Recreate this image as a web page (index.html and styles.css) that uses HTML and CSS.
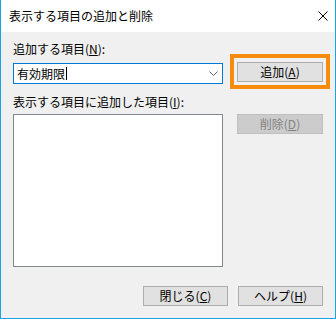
FILE: index.html
```html
<!DOCTYPE html>
<html lang="ja">
<head>
  <meta charset="UTF-8" />
  <title>表示する項目の追加と削除</title>
  <link rel="stylesheet" href="styles.css">
</head>
<body>
  <div class="window">
    <div class="titlebar">
      <span class="title">表示する項目の追加と削除</span>
      <svg class="close" width="10" height="10" viewBox="0 0 10 10">
        <path d="M0.5 0.5 L9.5 9.5 M9.5 0.5 L0.5 9.5" stroke="#000" stroke-width="1" fill="none" />
      </svg>
    </div>

    <div class="content">
      <div class="form">
        <div class="left">
          <div class="label">追加する項目(<u>N</u>):</div>
          <div class="combo">
            <span class="value">有効期限<span class="caret"></span></span>
            <svg class="chevron" width="9" height="5" viewBox="0 0 9 5">
              <path d="M0.5 0.5 L4.5 4.5 L8.5 0.5" stroke="#606060" stroke-width="1" fill="none" />
            </svg>
          </div>
          <div class="label second">表示する項目に追加した項目(<u>I</u>):</div>
          <div class="listbox"></div>
        </div>
        <div class="right">
          <div class="highlight">
            <button class="btn">追加(<u>A</u>)</button>
          </div>
          <button class="btn disabled">削除(<u>D</u>)</button>
        </div>
      </div>

      <div class="footer">
        <button class="btn">閉じる(<u>C</u>)</button>
        <button class="btn">ヘルプ(<u>H</u>)</button>
      </div>
    </div>
  </div>
</body>
</html>
```

FILE: styles.css
```css
:root {
  --win-border: #1aa1e6;
  --face: #f0f0f0;
  --btn-face: #e1e1e1;
  --btn-border: #adadad;
  --focus-blue: #0078d7;
  --mark: #f78b0e;
}

body {
  margin: 0;
  font-family: "Noto Sans CJK JP", "Noto Sans", sans-serif;
  font-size: 12px;
  color: #000;
}

.window {
  width: 336px;
  height: 319px;
  box-sizing: border-box;
  border: 1px solid var(--win-border);
  border-top: none;
  background-color: var(--face);
  display: flex;
  flex-direction: column;
}

/* タイトルバー */
.titlebar {
  height: 31px;
  flex-shrink: 0;
  background-color: #fff;
  display: flex;
  align-items: center;
  justify-content: space-between;
  padding: 0 7px 1px 8px;
}

.title {
  font-size: 12px;
  line-height: 16px;
}

.close {
  display: block;
}

.content {
  flex: 1;
  display: flex;
  flex-direction: column;
  padding: 9px 12px 12px 12px;
}

.form {
  display: flex;
  gap: 14px;
}

.left {
  width: 210px;
  display: flex;
  flex-direction: column;
}

.label {
  line-height: 16px;
  height: 16px;
  margin-bottom: 6px;
  white-space: nowrap;
}

.label.second {
  margin-top: 10px;
  margin-bottom: 4px;
}

.combo {
  height: 21px;
  box-sizing: border-box;
  border: 1px solid var(--focus-blue);
  background-color: #fff;
  display: flex;
  align-items: center;
  justify-content: space-between;
  padding: 0 4px 0 3px;
}

.value {
  display: flex;
  align-items: center;
  line-height: 16px;
}

.caret {
  width: 1px;
  height: 13px;
  background-color: #000;
  margin-left: 1px;
}

.chevron {
  display: block;
}

.listbox {
  height: 153px;
  box-sizing: border-box;
  border: 1px solid #828790;
  background-color: #fff;
}

.right {
  width: 86px;
  display: flex;
  flex-direction: column;
  padding-top: 21px;
}

/* 注目枠（オレンジ） */
.highlight {
  margin: -8px -7px 0 -7px;
  padding: 4px 3px 3px 3px;
  border: 4px solid var(--mark);
}

.btn {
  display: block;
  width: 86px;
  height: 20px;
  box-sizing: border-box;
  padding: 0;
  border: 1px solid var(--btn-border);
  background-color: var(--btn-face);
  font-family: inherit;
  font-size: 12px;
  line-height: 16px;
  color: #000;
}

.btn.disabled {
  margin-top: 25px;
  background-color: #cccccc;
  border-color: #bfbfbf;
  color: #838383;
}

.footer {
  margin-top: auto;
  display: flex;
  justify-content: flex-end;
  gap: 10px;
}

.footer .btn {
  width: 85px;
}
```
